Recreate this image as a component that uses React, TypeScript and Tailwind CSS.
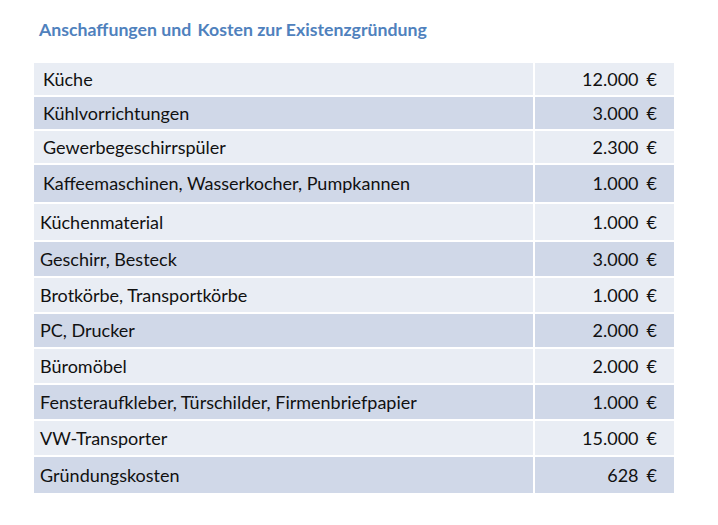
const rows = [
  { label: "Küche", amount: "12.000", h: "h-[32px]", indent: true },
  { label: "Kühlvorrichtungen", amount: "3.000", h: "h-[32px]", indent: true },
  { label: "Gewerbegeschirrspüler", amount: "2.300", h: "h-[32px]", indent: true },
  { label: "Kaffeemaschinen, Wasserkocher, Pumpkannen", amount: "1.000", h: "h-[37px]", indent: true },
  { label: "Küchenmaterial", amount: "1.000", h: "h-[36px]" },
  { label: "Geschirr, Besteck", amount: "3.000", h: "h-[34px]" },
  { label: "Brotkörbe, Transportkörbe", amount: "1.000", h: "h-[34px]" },
  { label: "PC, Drucker", amount: "2.000", h: "h-[33px]" },
  { label: "Büromöbel", amount: "2.000", h: "h-[34px]" },
  { label: "Fensteraufkleber, Türschilder, Firmenbriefpapier", amount: "1.000", h: "h-[34px]" },
  { label: "VW-Transporter", amount: "15.000", h: "h-[34px]" },
  { label: "Gründungskosten", amount: "628", h: "h-[36px]" },
];

export default function App() {
  return (
    <div className="w-[718px] h-[525px] bg-white font-['Lato','Open_Sans',sans-serif] text-[#111]">
      <h1 className="pl-[39px] pt-[18px] text-[17.7px] leading-[24px] font-bold text-[#4f81bd]">
        Anschaffungen und <span className="ml-[2px]">Kosten</span> zur Existenzgründung
      </h1>

      <div className="ml-[34px] mt-[21px] w-[640px] flex flex-col gap-[2px]">
        {rows.map((row, i) => (
          <div key={i} className={`flex gap-[2px] ${row.h}`}>
            <div
              className={`flex-1 flex items-center text-[18px] ${
                row.indent ? "pl-[9px]" : "pl-[6px]"
              } ${i % 2 === 0 ? "bg-[#e9edf4]" : "bg-[#d0d8e8]"}`}
            >
              {row.label}
            </div>
            <div
              className={`w-[139px] flex items-center justify-end gap-[8px] pr-[17px] text-[18px] ${
                i % 2 === 0 ? "bg-[#e9edf4]" : "bg-[#d0d8e8]"
              }`}
            >
              <span>{row.amount}</span>
              <span>€</span>
            </div>
          </div>
        ))}
      </div>
    </div>
  );
}
